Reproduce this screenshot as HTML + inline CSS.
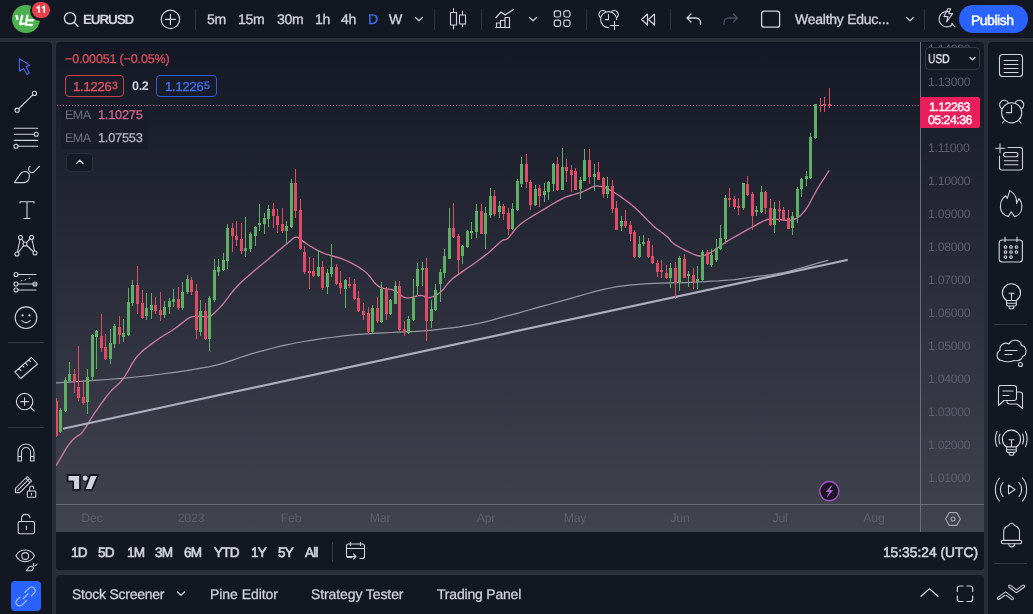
<!DOCTYPE html>
<html><head><meta charset="utf-8"><style>
html,body{margin:0;padding:0;width:1033px;height:614px;overflow:hidden;background:#2a2e39;font-family:"Liberation Sans",sans-serif}
.p{position:absolute;background:#131722;overflow:hidden}
.t{position:absolute;line-height:1;white-space:nowrap;will-change:transform;text-rendering:geometricPrecision}
.i{position:absolute;overflow:visible}
</style></head><body>
<div class="p" style="left:0;top:0;width:1033px;height:38px"></div>
<div class="p" style="left:0;top:42px;width:52px;height:572px;border-radius:0 4px 0 0"></div>
<div class="p" style="left:56px;top:42px;width:928px;height:490px;border-radius:4px 4px 0 0;background:linear-gradient(180deg,#141824 0%,#41444f 100%)"></div>
<div class="p" style="left:56px;top:532px;width:928px;height:38px;border-radius:0 0 4px 4px"></div>
<div class="p" style="left:56px;top:575px;width:928px;height:39px;border-radius:4px 4px 0 0"></div>
<div class="p" style="left:988px;top:42px;width:45px;height:572px;border-radius:4px 0 0 0"></div>

<svg style="position:absolute;left:56px;top:42px" width="928" height="490" viewBox="56 42 928 490">
<line x1="57" y1="105.5" x2="920" y2="105.5" stroke="#b66c8c" stroke-width="1" stroke-dasharray="1 2"/>
<path d="M56.0,383.0 L64.8,382.4 L77.0,381.6 L91.5,380.6 L106.9,379.5 L122.2,378.3 L136.0,377.0 L148.8,375.6 L161.8,374.0 L174.5,372.3 L186.7,370.6 L198.1,368.7 L208.4,366.8 L217.3,364.8 L225.1,362.6 L232.0,360.3 L238.5,358.0 L245.1,355.8 L252.0,353.7 L259.2,351.7 L266.2,349.8 L273.2,348.0 L280.4,346.2 L287.7,344.6 L295.5,343.0 L303.8,341.5 L312.6,340.1 L321.6,338.7 L330.7,337.5 L339.5,336.4 L347.8,335.4 L355.6,334.6 L363.2,334.1 L370.5,333.6 L377.6,333.2 L384.5,332.9 L391.4,332.5 L398.1,332.1 L404.5,331.9 L410.7,331.6 L416.9,331.3 L423.3,330.9 L430.0,330.3 L437.0,329.6 L444.4,328.7 L451.9,327.8 L459.3,326.8 L466.6,325.6 L473.6,324.4 L480.1,323.1 L486.2,321.6 L492.1,320.1 L498.1,318.4 L504.4,316.7 L511.3,314.8 L518.9,312.8 L526.9,310.5 L535.3,308.2 L543.8,305.9 L552.3,303.5 L560.7,301.2 L569.1,298.9 L577.6,296.4 L586.1,294.0 L594.4,291.7 L602.5,289.7 L610.0,288.0 L616.9,286.7 L623.2,285.8 L629.3,285.1 L635.2,284.6 L641.3,284.1 L647.8,283.7 L654.8,283.3 L662.1,283.1 L669.5,282.9 L677.0,282.7 L684.4,282.6 L691.4,282.3 L698.3,282.0 L705.2,281.6 L712.0,281.2 L718.5,280.9 L724.6,280.4 L730.0,280.0 L734.6,279.6 L738.3,279.1 L741.6,278.6 L744.8,278.1 L748.3,277.6 L752.3,277.0 L756.8,276.4 L761.5,275.9 L766.4,275.3 L771.6,274.6 L777.2,273.7 L783.3,272.5 L790.5,270.8 L799.0,268.5 L807.8,266.1 L816.2,263.7 L823.3,261.6 L828.4,260.2" fill="none" stroke="#979aa5" stroke-width="1.25"/>
<path d="M56.0,466.0 L57.2,463.9 L58.9,460.9 L60.9,457.4 L63.0,453.8 L65.0,450.4 L66.7,447.7 L68.1,445.6 L69.3,443.9 L70.4,442.5 L71.5,441.2 L72.6,440.0 L73.9,438.7 L75.3,437.5 L76.6,436.6 L78.1,435.7 L79.6,434.7 L81.1,433.4 L82.8,431.6 L84.5,429.2 L86.4,426.4 L88.3,423.2 L90.2,419.9 L92.3,416.5 L94.5,413.2 L96.9,409.8 L99.4,406.2 L102.0,402.6 L104.6,399.0 L107.2,395.7 L109.7,392.6 L112.0,390.0 L114.3,387.8 L116.5,385.8 L118.7,383.8 L120.9,381.5 L123.1,378.8 L125.3,375.5 L127.5,371.8 L129.8,367.9 L132.0,363.9 L134.4,360.1 L136.9,356.8 L139.5,353.9 L142.2,351.3 L145.0,348.9 L147.9,346.7 L150.9,344.4 L154.0,342.1 L157.4,339.7 L160.9,337.3 L164.6,335.0 L168.3,332.7 L171.9,330.5 L175.2,328.3 L178.2,326.1 L181.0,323.9 L183.7,321.7 L186.2,319.8 L188.8,318.1 L191.5,316.9 L194.4,316.3 L197.4,316.1 L200.4,316.3 L203.3,316.6 L205.8,316.9 L207.8,316.9 L209.1,316.8 L209.8,316.8 L210.2,316.8 L210.4,316.6 L210.9,316.1 L211.8,315.3 L213.2,314.1 L214.8,312.6 L216.6,310.8 L218.6,308.9 L220.5,306.8 L222.4,304.7 L224.3,302.4 L226.2,299.9 L228.2,297.3 L230.1,294.7 L232.0,292.2 L233.8,290.0 L235.4,288.2 L236.7,286.7 L237.9,285.4 L239.3,284.0 L241.0,282.4 L243.2,280.4 L245.9,278.0 L249.1,275.2 L252.6,272.2 L256.3,269.1 L260.0,266.0 L263.6,263.0 L267.3,259.9 L271.2,256.7 L275.1,253.4 L278.9,250.3 L282.4,247.4 L285.3,245.0 L287.7,243.0 L289.6,241.4 L291.2,240.0 L292.6,238.9 L293.8,238.0 L295.0,237.4 L296.0,237.1 L296.8,237.1 L297.4,237.3 L298.1,237.7 L298.8,238.3 L299.9,239.0 L301.2,239.8 L302.7,240.9 L304.3,242.1 L306.1,243.4 L308.0,244.7 L310.0,246.0 L312.1,247.2 L314.3,248.5 L316.7,249.8 L319.1,251.1 L321.8,252.4 L324.6,253.6 L327.7,254.7 L331.0,255.6 L334.5,256.5 L338.0,257.5 L341.5,258.6 L345.0,260.0 L348.5,261.6 L352.0,263.4 L355.6,265.3 L359.0,267.4 L362.2,269.5 L365.2,271.7 L367.8,274.1 L370.0,276.7 L372.0,279.4 L374.0,282.0 L376.0,284.3 L378.3,286.2 L380.8,287.5 L383.6,288.3 L386.4,288.8 L389.2,289.2 L391.8,289.7 L394.3,290.5 L396.5,291.7 L398.4,293.1 L400.2,294.6 L402.1,296.0 L403.9,297.1 L406.0,297.8 L408.3,297.9 L410.8,297.6 L413.4,297.0 L415.9,296.3 L418.3,295.7 L420.4,295.5 L422.1,295.7 L423.6,296.2 L424.9,296.9 L426.1,297.5 L427.5,297.8 L429.0,297.8 L430.8,297.4 L432.7,296.7 L434.7,295.9 L436.7,294.8 L438.7,293.5 L440.7,292.0 L442.5,290.3 L444.1,288.3 L445.8,286.2 L447.6,283.9 L449.7,281.5 L452.3,279.0 L455.6,276.4 L459.5,273.6 L463.8,270.6 L468.1,267.7 L472.1,265.0 L475.6,262.5 L478.5,260.3 L481.2,258.4 L483.5,256.6 L485.7,254.9 L487.9,253.2 L490.0,251.5 L492.1,249.6 L494.2,247.7 L496.2,245.8 L498.1,243.9 L499.9,242.3 L501.5,241.0 L502.9,240.2 L503.9,239.8 L504.9,239.7 L505.9,239.5 L507.0,239.0 L508.3,238.0 L509.8,236.4 L511.5,234.3 L513.2,232.0 L515.2,229.5 L517.3,227.1 L519.7,224.8 L522.3,222.7 L525.2,220.7 L528.3,218.7 L531.6,216.7 L535.0,214.7 L538.6,212.5 L542.5,210.1 L546.7,207.6 L551.0,205.0 L555.4,202.4 L559.6,200.1 L563.4,198.2 L566.9,196.7 L570.3,195.5 L573.5,194.6 L576.5,193.7 L579.3,192.9 L582.0,192.0 L584.4,191.0 L586.7,189.8 L588.7,188.8 L590.7,187.8 L592.5,187.0 L594.3,186.4 L596.0,186.1 L597.5,186.0 L598.9,186.1 L600.4,186.4 L601.9,186.8 L603.6,187.3 L605.4,187.9 L607.3,188.7 L609.2,189.6 L611.3,190.7 L613.5,192.0 L616.0,193.5 L618.7,195.3 L621.7,197.4 L624.9,199.7 L628.2,202.1 L631.4,204.7 L634.6,207.4 L637.8,210.3 L641.0,213.5 L644.2,216.8 L647.4,220.1 L650.4,223.1 L653.2,225.8 L655.8,228.1 L658.4,230.0 L660.8,231.8 L663.0,233.4 L665.1,235.0 L667.0,236.5 L668.5,238.0 L669.6,239.3 L670.5,240.5 L671.5,241.8 L672.9,243.1 L675.0,244.6 L678.0,246.4 L681.7,248.5 L685.8,250.7 L689.9,252.7 L693.8,254.4 L697.0,255.5 L699.5,256.0 L701.6,256.0 L703.4,255.7 L705.1,255.1 L706.9,254.3 L709.0,253.3 L711.3,252.1 L713.8,250.5 L716.3,248.7 L719.0,246.8 L721.7,244.8 L724.5,243.0 L727.4,241.2 L730.3,239.5 L733.4,237.7 L736.5,235.9 L739.7,234.1 L743.0,232.2 L746.6,230.2 L750.5,228.0 L754.4,225.8 L758.3,223.7 L761.8,221.9 L764.7,220.5 L766.9,219.7 L768.4,219.2 L769.5,219.1 L770.7,219.1 L772.1,219.2 L774.0,219.2 L776.6,219.3 L779.7,219.6 L783.1,220.0 L786.5,220.3 L789.8,220.3 L792.6,219.8 L795.0,219.0 L797.2,217.9 L799.2,216.5 L801.1,214.9 L803.0,212.9 L805.0,210.5 L807.1,207.6 L809.2,204.1 L811.2,200.3 L813.3,196.3 L815.4,192.5 L817.4,188.9 L819.5,185.4 L821.8,181.8 L824.1,178.3 L826.2,175.0 L827.9,172.3 L829.2,170.3" fill="none" stroke="#c9799d" stroke-width="1.35"/>
<line x1="64" y1="428.5" x2="847" y2="260" stroke="#acaebb" stroke-width="2.2" stroke-linecap="round"/>
<path fill="#5fae66" d="M60,408h1v25h-1z M59,410h3v22h-3z M65,377h1v35h-1z M64,380h3v31h-3z M69,362h1v20h-1z M68,374h3v7h-3z M87,369h1v45h-1z M86,377h3v25h-3z M92,334h1v47h-1z M91,335h3v42h-3z M96,330h1v39h-1z M95,331h3v6h-3z M110,329h1v35h-1z M109,343h3v16h-3z M114,324h1v24h-1z M113,326h3v18h-3z M123,319h1v23h-1z M122,333h3v4h-3z M128,288h1v48h-1z M127,302h3v33h-3z M132,280h1v26h-1z M131,285h3v18h-3z M146,293h1v27h-1z M145,308h3v8h-3z M151,293h1v26h-1z M150,305h3v5h-3z M164,301h1v17h-1z M163,307h3v8h-3z M169,298h1v16h-1z M168,301h3v6h-3z M173,289h1v18h-1z M172,299h3v3h-3z M182,282h1v28h-1z M181,292h3v16h-3z M187,275h1v19h-1z M186,279h3v13h-3z M200,300h1v36h-1z M199,311h3v21h-3z M209,296h1v55h-1z M208,298h3v41h-3z M214,259h1v43h-1z M213,270h3v30h-3z M218,259h1v17h-1z M217,267h3v5h-3z M223,253h1v18h-1z M222,260h3v10h-3z M227,224h1v45h-1z M226,228h3v33h-3z M245,217h1v40h-1z M244,248h3v3h-3z M250,232h1v20h-1z M249,234h3v15h-3z M255,226h1v20h-1z M254,227h3v9h-3z M259,204h1v27h-1z M258,223h3v2h-3z M264,213h1v21h-1z M263,218h3v6h-3z M268,205h1v22h-1z M267,209h3v10h-3z M286,221h1v23h-1z M285,226h3v5h-3z M291,179h1v49h-1z M290,183h3v44h-3z M318,250h1v27h-1z M317,267h3v9h-3z M327,269h1v25h-1z M326,273h3v14h-3z M331,244h1v33h-1z M330,267h3v7h-3z M345,279h1v29h-1z M344,280h3v9h-3z M372,305h1v29h-1z M371,308h3v24h-3z M381,282h1v41h-1z M380,289h3v33h-3z M390,299h1v16h-1z M389,300h3v14h-3z M395,281h1v23h-1z M394,286h3v18h-3z M408,316h1v18h-1z M407,319h3v14h-3z M413,279h1v42h-1z M412,298h3v22h-3z M417,263h1v32h-1z M416,269h3v17h-3z M422,262h1v24h-1z M421,268h3v2h-3z M431,300h1v28h-1z M430,309h3v12h-3z M435,284h1v27h-1z M434,290h3v20h-3z M440,269h1v33h-1z M439,272h3v12h-3z M444,249h1v29h-1z M443,256h3v17h-3z M449,208h1v51h-1z M448,228h3v31h-3z M462,245h1v19h-1z M461,246h3v10h-3z M467,230h1v18h-1z M466,231h3v16h-3z M471,222h1v17h-1z M470,231h3v2h-3z M476,204h1v34h-1z M475,211h3v21h-3z M485,207h1v42h-1z M484,213h3v21h-3z M490,188h1v30h-1z M489,196h3v19h-3z M499,201h1v17h-1z M498,206h3v6h-3z M512,203h1v27h-1z M511,209h3v20h-3z M517,179h1v32h-1z M516,181h3v29h-3z M521,157h1v30h-1z M520,164h3v20h-3z M535,185h1v21h-1z M534,189h3v16h-3z M544,183h1v19h-1z M543,191h3v4h-3z M548,181h1v19h-1z M547,182h3v10h-3z M553,163h1v28h-1z M552,164h3v20h-3z M562,148h1v42h-1z M561,167h3v23h-3z M580,177h1v22h-1z M579,180h3v9h-3z M584,149h1v32h-1z M583,160h3v21h-3z M594,164h1v27h-1z M593,174h3v3h-3z M607,177h1v21h-1z M606,186h3v8h-3z M621,216h1v15h-1z M620,221h3v5h-3z M639,236h1v22h-1z M638,244h3v13h-3z M643,235h1v11h-1z M642,242h3v2h-3z M670,263h1v25h-1z M669,268h3v10h-3z M679,256h1v35h-1z M678,258h3v25h-3z M688,271h1v16h-1z M687,274h3v2h-3z M697,266h1v23h-1z M696,279h3v3h-3z M702,250h1v31h-1z M701,252h3v28h-3z M711,249h1v18h-1z M710,255h3v10h-3z M716,239h1v23h-1z M715,248h3v12h-3z M720,225h1v25h-1z M719,238h3v11h-3z M725,195h1v49h-1z M724,198h3v41h-3z M743,183h1v27h-1z M742,183h3v25h-3z M756,206h1v10h-1z M755,210h3v2h-3z M761,186h1v27h-1z M760,192h3v20h-3z M774,202h1v31h-1z M773,209h3v16h-3z M792,212h1v23h-1z M791,216h3v12h-3z M797,187h1v36h-1z M796,189h3v28h-3z M801,178h1v19h-1z M800,179h3v10h-3z M806,171h1v15h-1z M805,176h3v3h-3z M810,133h1v46h-1z M809,137h3v41h-3z M815,104h1v35h-1z M814,104h3v34h-3z "/>
<path fill="#de4b67" d="M56,398h1v39h-1z M55,401h3v35h-3z M74,369h1v24h-1z M73,374h3v8h-3z M78,346h1v55h-1z M77,387h3v11h-3z M83,380h1v25h-1z M82,397h3v6h-3z M101,314h1v38h-1z M100,336h3v12h-3z M105,334h1v26h-1z M104,347h3v12h-3z M119,316h1v28h-1z M118,327h3v8h-3z M137,266h1v48h-1z M136,285h3v19h-3z M142,290h1v29h-1z M141,303h3v15h-3z M155,297h1v17h-1z M154,305h3v6h-3z M160,292h1v29h-1z M159,310h3v5h-3z M178,287h1v23h-1z M177,299h3v9h-3z M191,277h1v18h-1z M190,280h3v12h-3z M196,284h1v55h-1z M195,291h3v39h-3z M205,303h1v37h-1z M204,311h3v28h-3z M232,223h1v29h-1z M231,228h3v8h-3z M236,221h1v25h-1z M235,236h3v4h-3z M241,223h1v31h-1z M240,239h3v12h-3z M273,203h1v25h-1z M272,209h3v7h-3z M277,209h1v24h-1z M276,216h3v9h-3z M282,208h1v25h-1z M281,224h3v7h-3z M295,169h1v49h-1z M294,183h3v28h-3z M300,199h1v51h-1z M299,210h3v39h-3z M304,246h1v28h-1z M303,252h3v20h-3z M309,257h1v32h-1z M308,271h3v2h-3z M313,258h1v19h-1z M312,271h3v5h-3z M322,261h1v29h-1z M321,267h3v21h-3z M336,264h1v21h-1z M335,267h3v17h-3z M340,271h1v23h-1z M339,283h3v5h-3z M349,277h1v11h-1z M348,284h3v2h-3z M354,279h1v21h-1z M353,284h3v15h-3z M358,291h1v21h-1z M357,298h3v13h-3z M363,303h1v17h-1z M362,311h3v4h-3z M368,307h1v27h-1z M367,313h3v19h-3z M377,297h1v26h-1z M376,308h3v13h-3z M386,287h1v33h-1z M385,289h3v25h-3z M399,281h1v50h-1z M398,286h3v44h-3z M404,321h1v15h-1z M403,329h3v3h-3z M426,258h1v83h-1z M425,268h3v53h-3z M453,203h1v35h-1z M452,228h3v9h-3z M458,234h1v40h-1z M457,236h3v24h-3z M481,204h1v30h-1z M480,211h3v23h-3z M494,190h1v26h-1z M493,196h3v18h-3z M503,204h1v16h-1z M502,206h3v8h-3z M508,208h1v27h-1z M507,213h3v16h-3z M526,154h1v34h-1z M525,164h3v18h-3z M530,180h1v30h-1z M529,182h3v23h-3z M539,185h1v22h-1z M538,188h3v8h-3z M557,157h1v34h-1z M556,164h3v26h-3z M566,159h1v23h-1z M565,167h3v4h-3z M571,165h1v27h-1z M570,170h3v5h-3z M575,168h1v22h-1z M574,171h3v19h-3z M589,149h1v35h-1z M588,160h3v17h-3z M598,162h1v18h-1z M597,172h3v8h-3z M603,177h1v21h-1z M602,178h3v16h-3z M612,180h1v33h-1z M611,186h3v23h-3z M616,201h1v29h-1z M615,208h3v22h-3z M625,210h1v18h-1z M624,221h3v5h-3z M630,221h1v20h-1z M629,225h3v9h-3z M634,230h1v28h-1z M633,232h3v25h-3z M648,238h1v20h-1z M647,241h3v16h-3z M652,245h1v19h-1z M651,256h3v7h-3z M657,260h1v17h-1z M656,263h3v9h-3z M661,260h1v18h-1z M660,270h3v2h-3z M666,265h1v14h-1z M665,273h3v5h-3z M675,262h1v37h-1z M674,268h3v15h-3z M684,254h1v24h-1z M683,259h3v19h-3z M693,268h1v21h-1z M692,275h3v7h-3z M707,250h1v15h-1z M706,252h3v12h-3z M729,188h1v19h-1z M728,198h3v2h-3z M734,196h1v13h-1z M733,199h3v8h-3z M738,198h1v17h-1z M737,206h3v2h-3z M747,176h1v20h-1z M746,184h3v11h-3z M752,192h1v38h-1z M751,194h3v22h-3z M765,191h1v23h-1z M764,192h3v16h-3z M770,199h1v27h-1z M769,208h3v17h-3z M779,201h1v21h-1z M778,209h3v2h-3z M783,207h1v14h-1z M782,210h3v10h-3z M788,210h1v19h-1z M787,218h3v11h-3z M820,98h1v14h-1z M819,105h3v1h-3z M824,97h1v15h-1z M823,104h3v1h-3z M829,88h1v20h-1z M828,104h3v2h-3z "/>
<line x1="56" y1="504.5" x2="984" y2="504.5" stroke="#6c6f79" stroke-width="1"/>
<line x1="920.5" y1="42" x2="920.5" y2="532" stroke="#6c6f79" stroke-width="1"/>
</svg>
<div class="t" style="left:64.7px;top:53.07px;font-size:12.5px;font-weight:400;color:#de4f5c;letter-spacing:-0.15px;-webkit-text-stroke:0.25px #de4f5c">−0.00051 (−0.05%)</div>
<div style="position:absolute;left:64.7px;top:74.6px;width:59.7px;height:22.8px;box-sizing:border-box;border:1px solid #c3404c;border-radius:4px"></div>
<div class="t" style="left:73px;top:80.41px;font-size:13px;font-weight:400;color:#e05060;letter-spacing:-0.2px;-webkit-text-stroke:0.35px #e05060">1.1226<span style="font-size:10.5px;position:relative;top:-2.5px;margin-left:0.5px">3</span></div>
<div class="t" style="left:132.3px;top:80.47px;font-size:12.5px;font-weight:700;color:#d1d4dc;letter-spacing:-0.3px">0.2</div>
<div style="position:absolute;left:156.3px;top:74.6px;width:60.4px;height:22.8px;box-sizing:border-box;border:1px solid #2f5bd8;border-radius:4px"></div>
<div class="t" style="left:164.8px;top:80.41px;font-size:13px;font-weight:400;color:#3f6ff0;letter-spacing:-0.2px;-webkit-text-stroke:0.35px #3f6ff0">1.1226<span style="font-size:10.5px;position:relative;top:-2.5px;margin-left:0.5px">5</span></div>
<div style="position:absolute;left:61px;top:107px;width:87px;height:42px;background:rgba(19,23,34,0.35);border-radius:2px"></div>
<div class="t" style="left:65px;top:108.97px;font-size:12.5px;font-weight:400;color:#6d707b;letter-spacing:-0.5px">EMA</div>
<div class="t" style="left:97.5px;top:108.93px;font-size:12.8px;font-weight:400;color:#d46690;letter-spacing:-0.25px;-webkit-text-stroke:0.25px #d46690">1.10275</div>
<div class="t" style="left:65px;top:131.97px;font-size:12.5px;font-weight:400;color:#6d707b;letter-spacing:-0.5px">EMA</div>
<div class="t" style="left:97.5px;top:131.93px;font-size:12.8px;font-weight:400;color:#b2b5be;letter-spacing:-0.25px;-webkit-text-stroke:0.25px #b2b5be">1.07553</div>
<div style="position:absolute;left:65.6px;top:152.5px;width:27.5px;height:19.5px;box-sizing:border-box;border:1px solid #2a2e39;background:#161a25;border-radius:4px"></div>
<svg class="i" style="left:72px;top:156px" width="16" height="12" viewBox="72 156 16 12" fill="none" stroke="#d1d4dc" stroke-width="1.3" stroke-linecap="round" stroke-linejoin="round"><path d="M76.5,163.5 l3.3,-3.2 3.3,3.2"/></svg>
<div class="t" style="left:928.2px;top:42.69px;font-size:12.3px;font-weight:400;color:#5c5f6a;letter-spacing:-0.3px">1.14000</div>
<div class="t" style="left:928.2px;top:75.69px;font-size:12.3px;font-weight:400;color:#5c5f6a;letter-spacing:-0.3px">1.13000</div>
<div class="t" style="left:928.2px;top:141.69px;font-size:12.3px;font-weight:400;color:#5c5f6a;letter-spacing:-0.3px">1.11000</div>
<div class="t" style="left:928.2px;top:174.69px;font-size:12.3px;font-weight:400;color:#5c5f6a;letter-spacing:-0.3px">1.10000</div>
<div class="t" style="left:928.2px;top:207.69px;font-size:12.3px;font-weight:400;color:#5c5f6a;letter-spacing:-0.3px">1.09000</div>
<div class="t" style="left:928.2px;top:240.69px;font-size:12.3px;font-weight:400;color:#5c5f6a;letter-spacing:-0.3px">1.08000</div>
<div class="t" style="left:928.2px;top:273.69px;font-size:12.3px;font-weight:400;color:#5c5f6a;letter-spacing:-0.3px">1.07000</div>
<div class="t" style="left:928.2px;top:306.69px;font-size:12.3px;font-weight:400;color:#5c5f6a;letter-spacing:-0.3px">1.06000</div>
<div class="t" style="left:928.2px;top:339.69px;font-size:12.3px;font-weight:400;color:#5c5f6a;letter-spacing:-0.3px">1.05000</div>
<div class="t" style="left:928.2px;top:372.69px;font-size:12.3px;font-weight:400;color:#5c5f6a;letter-spacing:-0.3px">1.04000</div>
<div class="t" style="left:928.2px;top:405.69px;font-size:12.3px;font-weight:400;color:#5c5f6a;letter-spacing:-0.3px">1.03000</div>
<div class="t" style="left:928.2px;top:438.69px;font-size:12.3px;font-weight:400;color:#5c5f6a;letter-spacing:-0.3px">1.02000</div>
<div class="t" style="left:928.2px;top:471.69px;font-size:12.3px;font-weight:400;color:#5c5f6a;letter-spacing:-0.3px">1.01000</div>
<div style="position:absolute;left:924.5px;top:46.5px;width:55px;height:23.7px;box-sizing:border-box;border:1px solid #363a45;background:#131722;border-radius:4px"></div>
<div class="t" style="left:928.3px;top:52.53px;font-size:12.8px;font-weight:400;color:#e0e3eb;transform:scaleX(0.8);transform-origin:0 0;-webkit-text-stroke:0.35px #e0e3eb">USD</div>
<svg class="i" style="left:966px;top:54px" width="14" height="10" viewBox="966 54 14 10" fill="none" stroke="#d1d4dc" stroke-width="1.3" stroke-linecap="round" stroke-linejoin="round"><path d="M970,57.5 l2.5,2.3 2.5,-2.3"/></svg>
<div style="position:absolute;left:919.6px;top:97px;width:60.4px;height:31px;background:#e91e5a;border-radius:0 2px 2px 0"></div>
<div class="t" style="left:928.8px;top:100.58px;font-size:12.4px;font-weight:400;color:#fff0f5;letter-spacing:-0.55px;-webkit-text-stroke:0.5px #fff0f5">1.12263</div>
<div class="t" style="left:928.3px;top:114.38px;font-size:12.4px;font-weight:400;color:#fff0f5;letter-spacing:-0.55px;-webkit-text-stroke:0.5px #fff0f5">05:24:36</div>
<div class="t" style="left:-8px;width:200px;text-align:center;top:511.89px;font-size:12.3px;font-weight:400;color:#5c5f69;letter-spacing:-0.2px">Dec</div>
<div class="t" style="left:91px;width:200px;text-align:center;top:511.89px;font-size:12.3px;font-weight:400;color:#5c5f69;letter-spacing:-0.2px">2023</div>
<div class="t" style="left:190.5px;width:200px;text-align:center;top:511.89px;font-size:12.3px;font-weight:400;color:#5c5f69;letter-spacing:-0.2px">Feb</div>
<div class="t" style="left:280px;width:200px;text-align:center;top:511.89px;font-size:12.3px;font-weight:400;color:#5c5f69;letter-spacing:-0.2px">Mar</div>
<div class="t" style="left:386px;width:200px;text-align:center;top:511.89px;font-size:12.3px;font-weight:400;color:#5c5f69;letter-spacing:-0.2px">Apr</div>
<div class="t" style="left:475px;width:200px;text-align:center;top:511.89px;font-size:12.3px;font-weight:400;color:#5c5f69;letter-spacing:-0.2px">May</div>
<div class="t" style="left:580px;width:200px;text-align:center;top:511.89px;font-size:12.3px;font-weight:400;color:#5c5f69;letter-spacing:-0.2px">Jun</div>
<div class="t" style="left:680px;width:200px;text-align:center;top:511.89px;font-size:12.3px;font-weight:400;color:#5c5f69;letter-spacing:-0.2px">Jul</div>
<div class="t" style="left:773.5px;width:200px;text-align:center;top:511.89px;font-size:12.3px;font-weight:400;color:#5c5f69;letter-spacing:-0.2px">Aug</div>
<svg class="i" style="left:942px;top:508px" width="22" height="22" viewBox="942 508 22 22" fill="none" stroke="#a3a6af" stroke-width="1.1" stroke-linecap="round" stroke-linejoin="round"><path d="M949.3,512.6 H956.7 L960.4,519 L956.7,525.4 H949.3 L945.6,519 Z"/><circle cx="953" cy="519" r="2"/></svg>
<svg class="i" style="left:60px;top:468px" width="46" height="28" viewBox="60 468 46 28" fill="none" stroke="#d1d4dc" stroke-width="1" stroke-linecap="round" stroke-linejoin="round"><path d="M67.6,475 H80 V489.8 H73.2 V481.3 H67.6 Z M90.2,475 H98.2 L92,489.8 H84.7 Z" fill="#d1d4dc" stroke="#131722" stroke-width="1.8"/><circle cx="85.2" cy="478.1" r="3.1" fill="#d1d4dc" stroke="#131722" stroke-width="1.1"/></svg>
<svg class="i" style="left:816px;top:478px" width="28" height="28" viewBox="816 478 28 28" fill="none" stroke="#d1d4dc" stroke-width="1" stroke-linecap="round" stroke-linejoin="round"><circle cx="829.3" cy="491.2" r="9.6" fill="#1a1424" stroke="#a352c5" stroke-width="1.5"/><path d="M831.5,485.8 L826.3,491.5 L829.8,491.5 L827.5,496.5 L832.5,490.5 L829.2,490.5 Z" fill="#c06ae0" stroke="#c06ae0" stroke-width="0.6"/></svg>
<div style="position:absolute;left:12.1px;top:4.9px;width:27.8px;height:27.8px;border-radius:50%;background:#4caf50"></div>
<svg class="i" style="left:12px;top:5px" width="28" height="28" viewBox="12 5 28 28" fill="none" stroke="#f2fff0" stroke-width="1" stroke-linecap="round" stroke-linejoin="round"><path d="M16.6,16 L17.4,19 M22.2,15.8 L20.2,24 L23.5,23.6 M27.4,15.6 L25.7,24.6 L32,25 M27.2,20 L33.2,20.2" stroke-width="2.4"/></svg>
<div style="position:absolute;left:29.7px;top:-0.2px;width:22.5px;height:20.7px;border-radius:11px;background:#131722"></div>
<div style="position:absolute;left:31.7px;top:1.8px;width:18.5px;height:16.7px;border-radius:9px;background:#e5424d"></div>
<svg class="i" style="left:30px;top:0px" width="22" height="20" viewBox="30 0 22 20" fill="none" stroke="#ffffff" stroke-width="1.5" stroke-linecap="round" stroke-linejoin="round"><path d="M36.6,8.2 L39,6.4 V12.7 M41.9,8.2 L44.3,6.4 V12.7" stroke-linecap="butt" stroke-linejoin="miter"/></svg>
<svg class="i" style="left:62px;top:10px" width="20" height="20" viewBox="62 10 20 20" fill="none" stroke="#d1d4dc" stroke-width="1.4" stroke-linecap="round" stroke-linejoin="round"><circle cx="70" cy="18.2" r="5.6"/><path d="M74.2,22.4 L78,26.2"/></svg>
<div class="t" style="left:83px;top:12.95px;font-size:13.5px;font-weight:700;color:#d1d4dc;letter-spacing:-1.15px">EURUSD</div>
<svg class="i" style="left:158px;top:7px" width="26" height="26" viewBox="158 7 26 26" fill="none" stroke="#d1d4dc" stroke-width="1.2" stroke-linecap="round" stroke-linejoin="round"><circle cx="170.4" cy="19.4" r="9.2"/><path d="M170.4,14.4 v10 M165.4,19.4 h10"/></svg>
<div style="position:absolute;left:194.5px;top:9px;width:1px;height:21px;background:#2f333e"></div>
<div style="position:absolute;left:433.5px;top:9px;width:1px;height:21px;background:#2f333e"></div>
<div style="position:absolute;left:480.5px;top:9px;width:1px;height:21px;background:#2f333e"></div>
<div style="position:absolute;left:585.5px;top:9px;width:1px;height:21px;background:#2f333e"></div>
<div style="position:absolute;left:670.0px;top:9px;width:1px;height:21px;background:#2f333e"></div>
<div style="position:absolute;left:924.0px;top:9px;width:1px;height:21px;background:#2f333e"></div>
<div class="t" style="left:207px;top:12.30px;font-size:14px;font-weight:400;color:#d1d4dc;letter-spacing:-0.3px;-webkit-text-stroke:0.3px #d1d4dc">5m</div>
<div class="t" style="left:238.3px;top:12.30px;font-size:14px;font-weight:400;color:#d1d4dc;letter-spacing:-0.3px;-webkit-text-stroke:0.3px #d1d4dc">15m</div>
<div class="t" style="left:276.8px;top:12.30px;font-size:14px;font-weight:400;color:#d1d4dc;letter-spacing:-0.3px;-webkit-text-stroke:0.3px #d1d4dc">30m</div>
<div class="t" style="left:315px;top:12.30px;font-size:14px;font-weight:400;color:#d1d4dc;letter-spacing:-0.3px;-webkit-text-stroke:0.3px #d1d4dc">1h</div>
<div class="t" style="left:341px;top:12.30px;font-size:14px;font-weight:400;color:#d1d4dc;letter-spacing:-0.3px;-webkit-text-stroke:0.3px #d1d4dc">4h</div>
<div class="t" style="left:389.3px;top:12.30px;font-size:14px;font-weight:400;color:#d1d4dc;letter-spacing:-0.3px;-webkit-text-stroke:0.3px #d1d4dc">W</div>
<div class="t" style="left:368px;top:12.30px;font-size:14px;font-weight:400;color:#3a6cf6;-webkit-text-stroke:0.3px #3a6cf6">D</div>
<svg class="i" style="left:410px;top:12px" width="18" height="14" viewBox="410 12 18 14" fill="none" stroke="#d1d4dc" stroke-width="1.2" stroke-linecap="round" stroke-linejoin="round"><path d="M415.5,17.5 l3.5,3.3 3.5,-3.3"/></svg>
<svg class="i" style="left:446px;top:6px" width="24" height="26" viewBox="446 6 24 26" fill="none" stroke="#d1d4dc" stroke-width="1.1" stroke-linecap="round" stroke-linejoin="round"><path d="M453.5,8.5 v4 M453.5,25 v4 M450.5,12.5 h6 v12.5 h-6z M462.5,11 v4 M462.5,24 v2.5 M459.5,15 h6 v9 h-6z"/></svg>
<svg class="i" style="left:493px;top:7px" width="24" height="24" viewBox="493 7 24 24" fill="none" stroke="#d1d4dc" stroke-width="1.2" stroke-linecap="round" stroke-linejoin="round"><path d="M496,17.5 L501,12 L505,15 L513.5,9.5 M496.5,27 v-4 h4 v4 M500.5,27 v-6.5 h4.5 v6.5 M505,27 v-9.5 h4.5 v9.5 M496,27.5 h13.5"/></svg>
<svg class="i" style="left:524px;top:12px" width="18" height="14" viewBox="524 12 18 14" fill="none" stroke="#d1d4dc" stroke-width="1.2" stroke-linecap="round" stroke-linejoin="round"><path d="M529.5,17.5 l3.5,3.3 3.5,-3.3"/></svg>
<svg class="i" style="left:550px;top:7px" width="24" height="24" viewBox="550 7 24 24" fill="none" stroke="#d1d4dc" stroke-width="1.2" stroke-linecap="round" stroke-linejoin="round"><rect x="554.3" y="10.8" width="6.2" height="6.2" rx="1.8"/><rect x="563.8" y="10.8" width="6.2" height="6.2" rx="1.8"/><rect x="554.3" y="20.2" width="6.2" height="6.2" rx="1.8"/><rect x="563.8" y="20.2" width="6.2" height="6.2" rx="1.8"/></svg>
<svg class="i" style="left:595px;top:6px" width="28" height="28" viewBox="595 6 28 28" fill="none" stroke="#d1d4dc" stroke-width="1.1" stroke-linecap="round" stroke-linejoin="round"><path d="M616.6,19.6 A8,8 0 1 0 608.6,27.6 M608.5,14.5 V19.6 H605.3 M600.4,17.6 A4,4 0 1 1 605.6,11.4 M616.8,17.6 A4,4 0 1 0 611.6,11.4 M614.5,21.5 V29.5 M610.3,25.5 H618.7"/></svg>
<svg class="i" style="left:636px;top:10px" width="24" height="20" viewBox="636 10 24 20" fill="none" stroke="#d1d4dc" stroke-width="1.2" stroke-linecap="round" stroke-linejoin="round"><path d="M647.5,14 L641.5,19.5 L647.5,25 Z M654.5,14 L648.5,19.5 L654.5,25 Z"/></svg>
<svg class="i" style="left:682px;top:9px" width="24" height="22" viewBox="682 9 24 22" fill="none" stroke="#d1d4dc" stroke-width="1.3" stroke-linecap="round" stroke-linejoin="round"><path d="M691,14 L687,18 L691,22 M687,18 H696 a4.5,4.5 0 0 1 4.5,4.5 v2"/></svg>
<svg class="i" style="left:720px;top:9px" width="24" height="22" viewBox="720 9 24 22" fill="none" stroke="#4a4e59" stroke-width="1.3" stroke-linecap="round" stroke-linejoin="round"><path d="M733.5,14 L737.5,18 L733.5,22 M737.5,18 H728.5 a4.5,4.5 0 0 0 -4.5,4.5 v2"/></svg>
<svg class="i" style="left:757px;top:7px" width="28" height="26" viewBox="757 7 28 26" fill="none" stroke="#d1d4dc" stroke-width="1.3" stroke-linecap="round" stroke-linejoin="round"><rect x="761.6" y="11.2" width="18" height="16" rx="2.5"/></svg>
<div class="t" style="left:794.6px;top:12.40px;font-size:14px;font-weight:400;color:#d1d4dc;letter-spacing:-0.25px;-webkit-text-stroke:0.3px #d1d4dc">Wealthy Educ...</div>
<svg class="i" style="left:900px;top:12px" width="20" height="14" viewBox="900 12 20 14" fill="none" stroke="#d1d4dc" stroke-width="1.2" stroke-linecap="round" stroke-linejoin="round"><path d="M906.5,17.5 l3.5,3.3 3.5,-3.3"/></svg>
<svg class="i" style="left:935px;top:5px" width="24" height="26" viewBox="935 5 24 26" fill="none" stroke="#d1d4dc" stroke-width="1.1" stroke-linecap="round" stroke-linejoin="round"><path d="M949.4,11.9 A7.7,7.7 0 1 0 952.7,24.05 M951.8,23.5 L955,26.8"/><path d="M947.8,8.8 L944,16.6 L948,16.6 L946.6,22 L952.6,13.6 L948.7,13.6 L950.6,8.8 Z"/></svg>
<div style="position:absolute;left:959px;top:5px;width:69px;height:28px;border-radius:14px;background:#2962ff"></div>
<div class="t" style="left:971.4px;top:12.60px;font-size:14px;font-weight:400;color:#ffffff;letter-spacing:-0.5px;-webkit-text-stroke:0.45px #fff">Publish</div>
<svg class="i" style="left:14px;top:54px" width="22" height="24" viewBox="14 54 22 24" fill="none" stroke="#4a62ee" stroke-width="1.1" stroke-linecap="round" stroke-linejoin="round"><path d="M19.3,58.6 L29.8,65.2 L26.2,66.8 L29.3,73 L27,74.6 L23.6,68.6 L19.5,71.2 Z"/></svg>
<svg class="i" style="left:10px;top:88px" width="30" height="28" viewBox="10 88 30 28" fill="none" stroke="#d1d4dc" stroke-width="1.1" stroke-linecap="round" stroke-linejoin="round"><circle cx="17.2" cy="110.2" r="2.1"/><circle cx="34.4" cy="93.4" r="2.1"/><path d="M18.7,108.7 L32.9,94.9"/></svg>
<svg class="i" style="left:10px;top:124px" width="32" height="28" viewBox="10 124 32 28" fill="none" stroke="#d1d4dc" stroke-width="1.1" stroke-linecap="round" stroke-linejoin="round"><path d="M14.5,128.2 H37.5 M14.5,134.2 H34 M14.5,140.4 H37.5 M18.2,146.2 H37.5"/><circle cx="36.2" cy="134.2" r="2"/><circle cx="16" cy="146.2" r="2"/></svg>
<svg class="i" style="left:10px;top:162px" width="32" height="24" viewBox="10 162 32 24" fill="none" stroke="#d1d4dc" stroke-width="1.1" stroke-linecap="round" stroke-linejoin="round"><path d="M14.4,182.6 L20.5,173.8 C22.5,171 27,170.6 28.9,173.6 C30.5,177 28.5,182.6 24,182.6 Z M30,166.4 C28,167.6 28,171 30.5,172.3 C32,173 33,172.8 34,171.8 L39.3,166.4"/></svg>
<svg class="i" style="left:14px;top:198px" width="24" height="24" viewBox="14 198 24 24" fill="none" stroke="#d1d4dc" stroke-width="1.1" stroke-linecap="round" stroke-linejoin="round"><path d="M20,203 V201.8 H34 V203 M27,201.8 V218.5 M24,218.5 H30"/></svg>
<svg class="i" style="left:10px;top:230px" width="32" height="30" viewBox="10 230 32 30" fill="none" stroke="#d1d4dc" stroke-width="1.1" stroke-linecap="round" stroke-linejoin="round"><path d="M17,254 L20.5,237.5 L25,244 L31.5,237.5 L35,253 M17,254 L25,244 L35,253"/><circle cx="17" cy="254" r="2" fill="#131722"/><circle cx="20.5" cy="237.5" r="2" fill="#131722"/><circle cx="31.5" cy="237.5" r="2" fill="#131722"/><circle cx="25" cy="244" r="2" fill="#131722"/><circle cx="35" cy="253" r="2" fill="#131722"/></svg>
<svg class="i" style="left:10px;top:268px" width="32" height="28" viewBox="10 268 32 28" fill="none" stroke="#d1d4dc" stroke-width="1.1" stroke-linecap="round" stroke-linejoin="round"><circle cx="16" cy="274.5" r="2"/><circle cx="16" cy="284" r="2"/><circle cx="16" cy="290" r="2"/><path d="M18,274.5 H36 M18,284 H36 M18,290 H36"/><path d="M21,281 l1,-0.5 M25,280 l1,-0.5 M29,278.5 l1,-0.5" stroke-width="1"/><circle cx="35" cy="284" r="2"/></svg>
<svg class="i" style="left:12px;top:304px" width="28" height="28" viewBox="12 304 28 28" fill="none" stroke="#d1d4dc" stroke-width="1.1" stroke-linecap="round" stroke-linejoin="round"><circle cx="26" cy="317.7" r="10.8"/><path d="M21.8,320.5 c2.5,2.8 5.8,2.8 8.4,0"/><circle cx="22.6" cy="315.3" r="0.6" fill="#d1d4dc"/><circle cx="29.4" cy="315.3" r="0.6" fill="#d1d4dc"/></svg>
<div style="position:absolute;left:8px;top:341.5px;width:36px;height:1px;background:#363a45"></div>
<svg class="i" style="left:10px;top:352px" width="32" height="30" viewBox="10 352 32 30" fill="none" stroke="#d1d4dc" stroke-width="1.1" stroke-linecap="round" stroke-linejoin="round"><path d="M14.8,372 L31.5,357.5 L37.5,364 L20.8,378.5 Z M19,368.5 l2,2.2 M22.5,365.5 l1.4,1.6 M25.5,363 l2,2.2 M29,360 l1.4,1.6"/></svg>
<svg class="i" style="left:12px;top:390px" width="26" height="24" viewBox="12 390 26 24" fill="none" stroke="#d1d4dc" stroke-width="1.1" stroke-linecap="round" stroke-linejoin="round"><circle cx="24.6" cy="401.6" r="8.2"/><path d="M30.5,407.5 L34.2,411 M24.6,397.8 v7.6 M20.8,401.6 h7.6"/></svg>
<div style="position:absolute;left:8px;top:427px;width:36px;height:1px;background:#363a45"></div>
<svg class="i" style="left:12px;top:440px" width="26" height="24" viewBox="12 440 26 24" fill="none" stroke="#d1d4dc" stroke-width="1.1" stroke-linecap="round" stroke-linejoin="round"><path d="M18,461 V452 a8,8 0 0 1 16,0 V461 H30.5 V452 a4.5,4.5 0 0 0 -9,0 V461 Z M18,456.5 H21.5 M30.5,456.5 H34"/></svg>
<svg class="i" style="left:10px;top:472px" width="32" height="28" viewBox="10 472 32 28" fill="none" stroke="#d1d4dc" stroke-width="1.05" stroke-linecap="round" stroke-linejoin="round"><path d="M15.5,492.6 L15.5,488.3 L27.3,476.5 L31.6,480.8 L19.8,492.6 Z M17.6,490.4 L29.4,478.6 M25.9,478.2 L29.9,482.5"/><rect x="27.3" y="491" width="8.5" height="6.3" rx="0.8"/><path d="M29.7,491 V488 a2,2 0 0 1 4,0 V488.6 M31.5,493.6 V495"/></svg>
<svg class="i" style="left:12px;top:512px" width="26" height="26" viewBox="12 512 26 26" fill="none" stroke="#d1d4dc" stroke-width="1.1" stroke-linecap="round" stroke-linejoin="round"><rect x="18.2" y="521.5" width="16.3" height="12.3" rx="1.8"/><path d="M21.5,521.5 V518.5 a4.3,4.3 0 0 1 8.5,-0.8 M26.4,526 v3.5"/></svg>
<svg class="i" style="left:12px;top:544px" width="30" height="32" viewBox="12 544 30 32" fill="none" stroke="#d1d4dc" stroke-width="1.05" stroke-linecap="round" stroke-linejoin="round"><path d="M16,555.8 C19.5,548 30.7,548 34.5,555.8 C30.7,563.6 19.5,563.6 16,555.8 Z M26.3,570.8 L29,567.3 C30,566 32,565.8 33,567 C33.8,568.5 32.5,570.8 30.5,570.8 Z M33.6,563.6 C33,564.2 33.2,565.6 34.3,565.9 C35,566 35.5,565.6 36,565.2 L37,564.2"/><circle cx="25.2" cy="556" r="3.4"/></svg>
<div style="position:absolute;left:10.7px;top:580.8px;width:30.3px;height:30.3px;border-radius:4px;background:#2962ff"></div>
<svg class="i" style="left:10px;top:580px" width="32" height="32" viewBox="10 580 32 32" fill="none" stroke="#b4ccff" stroke-width="1.1" stroke-linecap="round" stroke-linejoin="round"><path d="M24.9,592.3 L29.1,588.1 A3.5,3.5 0 0 1 34.1,593.1 L31.3,595.9 M19.9,597.1 L17.1,599.9 A3.5,3.5 0 0 0 22.1,604.9 L26.3,600.7 M23.3,598.7 L28.1,593.9"/></svg>
<svg class="i" style="left:994px;top:50px" width="34" height="30" viewBox="994 50 34 30" fill="none" stroke="#d1d4dc" stroke-width="1.1" stroke-linecap="round" stroke-linejoin="round"><rect x="999.5" y="54.5" width="23" height="22" rx="3"/><path d="M1004,60.5 H1018 M1004,64.5 H1018 M1004,68.5 H1018 M1004,72.5 H1018"/></svg>
<svg class="i" style="left:994px;top:94px" width="34" height="34" viewBox="994 94 34 34" fill="none" stroke="#d1d4dc" stroke-width="1.1" stroke-linecap="round" stroke-linejoin="round"><circle cx="1011.7" cy="112.8" r="10.1"/><path d="M1011.5,105.2 V112.6 H1006.4 M1001.9,108.8 A4.6,4.6 0 1 1 1008.3,102.7 M1021.5,108.8 A4.6,4.6 0 1 0 1015.1,102.7 M1004.2,121 L1002.4,123 M1019.2,121 L1021,123"/></svg>
<svg class="i" style="left:992px;top:140px" width="36" height="34" viewBox="992 140 36 34" fill="none" stroke="#d1d4dc" stroke-width="1.1" stroke-linecap="round" stroke-linejoin="round"><path d="M1000,144 v8.7 M995.8,148.3 h8.7 M1008,147.5 H1020 a2.5,2.5 0 0 1 2.5,2.5 V167.5 a2.5,2.5 0 0 1 -2.5,2.5 H1002 a2.5,2.5 0 0 1 -2.5,-2.5 V156 M1004.5,160.7 H1018 M1004.5,164.7 H1018"/><rect x="1003.5" y="152.5" width="14.5" height="4.2" rx="2.1"/></svg>
<svg class="i" style="left:994px;top:186px" width="34" height="34" viewBox="994 186 34 34" fill="none" stroke="#d1d4dc" stroke-width="1.1" stroke-linecap="round" stroke-linejoin="round"><path d="M1009.8,190.6 C1012.8,192.5 1015.8,196 1016.4,199.5 L1016.6,203.6 L1018.9,198.6 C1021,200.6 1022,204 1021.8,208 C1021.5,212.5 1018.5,216 1014.5,216.6 L1011.2,211.8 L1008.4,216.4 C1004,215.6 1000.5,212 1000.4,207.5 C1000.3,202 1002.5,197.8 1005.8,195.8 L1007.3,198.4 Z"/></svg>
<svg class="i" style="left:994px;top:232px" width="34" height="34" viewBox="994 232 34 34" fill="none" stroke="#d1d4dc" stroke-width="1.1" stroke-linecap="round" stroke-linejoin="round"><rect x="999.2" y="240" width="23.2" height="22" rx="3"/><path d="M1005,237 v4.5 M1017,237 v4.5"/><circle cx="1005.5" cy="247" r="1.3"/><circle cx="1011" cy="247" r="1.3"/><circle cx="1016.5" cy="247" r="1.3"/><circle cx="1005.5" cy="252" r="1.3"/><circle cx="1011" cy="252" r="1.3"/><circle cx="1016.5" cy="252" r="1.3"/><circle cx="1005.5" cy="257" r="1.3"/><circle cx="1011" cy="257" r="1.3"/></svg>
<svg class="i" style="left:996px;top:280px" width="30" height="34" viewBox="996 280 30 34" fill="none" stroke="#d1d4dc" stroke-width="1.1" stroke-linecap="round" stroke-linejoin="round"><path d="M1006.6,300.5 A9.1,9.1 0 1 1 1016.3,300.5 M1006.6,300.5 V304.5 a1.5,1.5 0 0 0 1.5,1.5 H1014.8 a1.5,1.5 0 0 0 1.5,-1.5 V300.5 Z M1006.6,303.3 H1016.3 M1009.2,306.0 V307.5 a1.2,1.2 0 0 0 1.2,1.2 H1012.5 a1.2,1.2 0 0 0 1.2,-1.2 V306.0 M1009,293.3 H1014 M1011.5,293.3 V300.5"/></svg>
<div style="position:absolute;left:994px;top:323.5px;width:33px;height:1px;background:#363a45"></div>
<svg class="i" style="left:992px;top:334px" width="38" height="38" viewBox="992 334 38 38" fill="none" stroke="#d1d4dc" stroke-width="1.1" stroke-linecap="round" stroke-linejoin="round"><path d="M1001.5,360.5 C996.5,360 995.5,352.5 1000,350.5 C999,345 1005,341.5 1009,344 C1011.5,338.5 1020.5,339 1021.5,345.5 C1026.5,346 1028,354.5 1022.5,356.5 C1021.5,360.5 1017,361 1014,360.5 C1010,362 1005,362 1001.5,360.5 Z M1005,350.5 H1017 M1005,354.5 H1012"/><circle cx="1020.5" cy="364.5" r="2"/></svg>
<svg class="i" style="left:994px;top:380px" width="34" height="34" viewBox="994 380 34 34" fill="none" stroke="#d1d4dc" stroke-width="1.1" stroke-linecap="round" stroke-linejoin="round"><path d="M998.5,405.5 V388 a2.5,2.5 0 0 1 2.5,-2.5 H1014 a2.5,2.5 0 0 1 2.5,2.5 V398 a2.5,2.5 0 0 1 -2.5,2.5 H1004 Z M1016.5,392 H1020 a2.5,2.5 0 0 1 2.5,2.5 V408.5 L1017,404 H1009.5 a2.5,2.5 0 0 1 -2.5,-2.5 M1003,391 H1013 M1003,395.5 H1009"/></svg>
<svg class="i" style="left:992px;top:426px" width="38" height="34" viewBox="992 426 38 34" fill="none" stroke="#d1d4dc" stroke-width="1.1" stroke-linecap="round" stroke-linejoin="round"><path d="M1006.6,446.9 A9.1,9.1 0 1 1 1016.3,446.9 M1006.6,446.9 V450.9 a1.5,1.5 0 0 0 1.5,1.5 H1014.8 a1.5,1.5 0 0 0 1.5,-1.5 V446.9 Z M1006.6,449.7 H1016.3 M1009.2,452.4 V453.9 a1.2,1.2 0 0 0 1.2,1.2 H1012.5 a1.2,1.2 0 0 0 1.2,-1.2 V452.4 M1009,439.7 H1014 M1011.5,439.7 V446.9 M1000,434 C998.6,437 998.6,441 1000,444 M997,431.5 C995,436 995,442 997,446.5 M1022.5,434 C1023.9,437 1023.9,441 1022.5,444 M1025.5,431.5 C1027.5,436 1027.5,442 1025.5,446.5"/></svg>
<svg class="i" style="left:992px;top:472px" width="38" height="34" viewBox="992 472 38 34" fill="none" stroke="#d1d4dc" stroke-width="1.1" stroke-linecap="round" stroke-linejoin="round"><path d="M1003,482.5 C999.5,486.5 999.5,492.5 1003,496.5 M1019,482.5 C1022.5,486.5 1022.5,492.5 1019,496.5 M999.5,478 C994,484 994,495 999.5,501 M1022.5,478 C1028,484 1028,495 1022.5,501 M1008.5,485 V494 L1015,489.5 Z"/></svg>
<svg class="i" style="left:996px;top:519px" width="30" height="32" viewBox="996 519 30 32" fill="none" stroke="#d1d4dc" stroke-width="1.1" stroke-linecap="round" stroke-linejoin="round"><path d="M1003.7,540.4 V531.8 C1003.7,528.8 1005.8,526.5 1008.5,525.6 C1009.5,524.1 1010.4,523.3 1011.6,523.3 C1012.8,523.3 1013.7,524.1 1014.7,525.6 C1017.4,526.5 1019.5,528.8 1019.5,531.8 V540.4 M1008.8,544 a2.9,2.9 0 0 0 5.8,0"/><rect x="1001.3" y="540.4" width="20.4" height="3.4" rx="1.7"/></svg>
<div style="position:absolute;left:994px;top:563px;width:33px;height:1px;background:#363a45"></div>
<svg class="i" style="left:994px;top:580px" width="34" height="24" viewBox="994 580 34 24" fill="none" stroke="#d1d4dc" stroke-width="1.2" stroke-linecap="round" stroke-linejoin="round"><path d="M998.5,598.3 L1005.6,593.3 L1012.2,598.5 M1009.8,586.3 L1016.4,591.3 L1023.4,586.3" stroke-width="3.4"/><path d="M998.5,598.3 L1005.6,593.3 L1012.2,598.5 M1009.8,586.3 L1016.4,591.3 L1023.4,586.3" stroke="#131722" stroke-width="1.4"/></svg>
<div class="t" style="left:70.9px;top:546.04px;font-size:13.6px;font-weight:400;color:#d1d4dc;letter-spacing:-0.75px;-webkit-text-stroke:0.6px #d1d4dc">1D</div>
<div class="t" style="left:97.8px;top:546.04px;font-size:13.6px;font-weight:400;color:#d1d4dc;letter-spacing:-0.75px;-webkit-text-stroke:0.6px #d1d4dc">5D</div>
<div class="t" style="left:126.6px;top:546.04px;font-size:13.6px;font-weight:400;color:#d1d4dc;letter-spacing:-0.75px;-webkit-text-stroke:0.6px #d1d4dc">1M</div>
<div class="t" style="left:155px;top:546.04px;font-size:13.6px;font-weight:400;color:#d1d4dc;letter-spacing:-0.75px;-webkit-text-stroke:0.6px #d1d4dc">3M</div>
<div class="t" style="left:184px;top:546.04px;font-size:13.6px;font-weight:400;color:#d1d4dc;letter-spacing:-0.75px;-webkit-text-stroke:0.6px #d1d4dc">6M</div>
<div class="t" style="left:214px;top:546.04px;font-size:13.6px;font-weight:400;color:#d1d4dc;letter-spacing:-0.75px;-webkit-text-stroke:0.6px #d1d4dc">YTD</div>
<div class="t" style="left:250.5px;top:546.04px;font-size:13.6px;font-weight:400;color:#d1d4dc;letter-spacing:-0.75px;-webkit-text-stroke:0.6px #d1d4dc">1Y</div>
<div class="t" style="left:277.8px;top:546.04px;font-size:13.6px;font-weight:400;color:#d1d4dc;letter-spacing:-0.75px;-webkit-text-stroke:0.6px #d1d4dc">5Y</div>
<div class="t" style="left:304.8px;top:546.04px;font-size:13.6px;font-weight:400;color:#d1d4dc;letter-spacing:-0.75px;-webkit-text-stroke:0.6px #d1d4dc">All</div>
<div style="position:absolute;left:332.3px;top:542.4px;width:1px;height:20px;background:#363a45"></div>
<svg class="i" style="left:342px;top:538px" width="28" height="26" viewBox="342 538 28 26" fill="none" stroke="#d1d4dc" stroke-width="1.1" stroke-linecap="round" stroke-linejoin="round"><path d="M352,557.5 H348.5 a2,2 0 0 1 -2,-2 V546 a2,2 0 0 1 2,-2 H362.5 a2,2 0 0 1 2,2 V556.5 a2,2 0 0 1 -2,2 H360 M346.5,548.5 H364.5 M350.5,542.5 V545.5 M360.5,542.5 V545.5 M347,556.5 H356 M353.5,554 L356,556.5 L353.5,559"/></svg>
<div class="t" style="left:677.6px;width:300px;text-align:right;top:545.92px;font-size:13.8px;font-weight:400;color:#d1d4dc;letter-spacing:0px;-webkit-text-stroke:0.55px #d1d4dc">15:35:24 (UTC)</div>
<div class="t" style="left:72px;top:587.40px;font-size:14px;font-weight:400;color:#d1d4dc;letter-spacing:-0.25px;-webkit-text-stroke:0.25px #d1d4dc">Stock Screener</div>
<svg class="i" style="left:172px;top:588px" width="18" height="12" viewBox="172 588 18 12" fill="none" stroke="#d1d4dc" stroke-width="1.2" stroke-linecap="round" stroke-linejoin="round"><path d="M177.5,592 l3.5,3.3 3.5,-3.3"/></svg>
<div class="t" style="left:210.3px;top:587.40px;font-size:14px;font-weight:400;color:#d1d4dc;letter-spacing:-0.05px;-webkit-text-stroke:0.25px #d1d4dc">Pine Editor</div>
<div class="t" style="left:310.6px;top:587.40px;font-size:14px;font-weight:400;color:#d1d4dc;letter-spacing:-0.1px;-webkit-text-stroke:0.25px #d1d4dc">Strategy Tester</div>
<div class="t" style="left:437px;top:587.40px;font-size:14px;font-weight:400;color:#d1d4dc;letter-spacing:-0.2px;-webkit-text-stroke:0.25px #d1d4dc">Trading Panel</div>
<svg class="i" style="left:916px;top:582px" width="26" height="18" viewBox="916 582 26 18" fill="none" stroke="#d1d4dc" stroke-width="1.2" stroke-linecap="round" stroke-linejoin="round"><path d="M921,596.3 L929.5,588.8 L938,596.3"/></svg>
<svg class="i" style="left:952px;top:580px" width="26" height="26" viewBox="952 580 26 26" fill="none" stroke="#d1d4dc" stroke-width="1.2" stroke-linecap="round" stroke-linejoin="round"><path d="M957.3,591.5 V588.5 a2.5,2.5 0 0 1 2.5,-2.5 H963 M967,586 H970.2 a2.5,2.5 0 0 1 2.5,2.5 V591.5 M972.7,596 V599 a2.5,2.5 0 0 1 -2.5,2.5 H967 M963,601.5 H959.8 a2.5,2.5 0 0 1 -2.5,-2.5 V596"/></svg>
</body></html>
